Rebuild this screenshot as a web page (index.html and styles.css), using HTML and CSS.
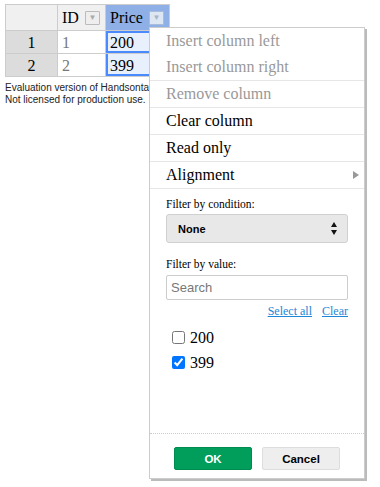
FILE: index.html
```html
<!DOCTYPE html>
<html lang="en">
  <head>
    <meta charset="UTF-8" />
    <meta name="viewport" content="width=device-width, initial-scale=1" />
    <title>Handsontable Filters</title>
    <link rel="stylesheet" href="styles.css">
  </head>
  <body>
    <div class="sheet">
      <table class="grid">
        <colgroup>
          <col class="col-rowhead" />
          <col class="col-id" />
          <col class="col-price" />
        </colgroup>
        <thead>
          <tr>
            <th class="corner"></th>
            <th class="colhead">
              <div class="colhead-inner">
                <span>ID</span>
                <button class="dropdown-btn">&#9660;</button>
              </div>
            </th>
            <th class="colhead active">
              <div class="colhead-inner">
                <span>Price</span>
                <button class="dropdown-btn">&#9660;</button>
              </div>
            </th>
          </tr>
        </thead>
        <tbody>
          <tr>
            <th class="rowhead">1</th>
            <td class="dimmed">1</td>
            <td class="area current">200</td>
          </tr>
          <tr>
            <th class="rowhead">2</th>
            <td class="dimmed">2</td>
            <td class="area last">399</td>
          </tr>
        </tbody>
      </table>
      <div class="license">
        Evaluation version of Handsontable<br />
        Not licensed for production use.
      </div>
    </div>

    <div class="menu">
      <ul class="menu-list">
        <li class="menu-item disabled first">Insert column left</li>
        <li class="menu-item disabled">Insert column right</li>
        <li class="menu-item disabled">Remove column</li>
        <li class="menu-item">Clear column</li>
        <li class="menu-item">Read only</li>
        <li class="menu-item submenu">
          <span>Alignment</span>
          <svg class="submenu-arrow" width="6" height="8" viewBox="0 0 6 8">
            <path d="M0 0 L6 4 L0 8 Z" fill="#999" />
          </svg>
        </li>
      </ul>

      <div class="filter">
        <label class="filter-label">Filter by condition:</label>
        <div class="select">
          <span>None</span>
          <svg width="6" height="13" viewBox="0 0 6 13">
            <path d="M3 0 L6 5 L0 5 Z" fill="#111" />
            <path d="M0 8 L6 8 L3 13 Z" fill="#111" />
          </svg>
        </div>

        <label class="filter-label value-label">Filter by value:</label>
        <input class="search" type="text" placeholder="Search" />
        <div class="links">
          <a href="#">Select all</a>
          <a href="#">Clear</a>
        </div>
        <ul class="values">
          <li><input type="checkbox" id="v200" /><label for="v200">200</label></li>
          <li><input type="checkbox" id="v399" checked /><label for="v399">399</label></li>
        </ul>
      </div>

      <div class="menu-footer">
        <button class="btn btn-ok">OK</button>
        <button class="btn btn-cancel">Cancel</button>
      </div>
    </div>
  </body>
</html>
```

FILE: styles.css
```css
:root {
  --serif: 'Liberation Serif', 'Times New Roman', serif;
  --sans: 'Liberation Sans', Arial, sans-serif;
  --grid-border: #ccc;
  --select-blue: #4b89ff;
}
* {
  box-sizing: border-box;
}
html,
body {
  margin: 0;
  padding: 0;
  background: #fff;
  color: #000;
  font-family: var(--serif);
  font-size: 16px;
}
body {
  position: relative;
  height: 487px;
  overflow: hidden;
}
.sheet {
  padding: 4px 0 0 5px;
}

/* grid */
.grid {
  border-collapse: collapse;
  table-layout: fixed;
  width: 164px;
}
.col-rowhead {
  width: 52px;
}
.col-id {
  width: 48px;
}
.col-price {
  width: 64px;
}
.grid th,
.grid td {
  border: 1px solid var(--grid-border);
  padding: 0 4px;
  height: 23px;
  line-height: 21px;
  font-weight: 400;
  text-align: left;
  white-space: nowrap;
  overflow: hidden;
}
.grid thead th {
  height: 26px;
  background: #f0f0f0;
}
.grid thead th.active {
  background: #8eb0e7;
}
.colhead-inner {
  display: flex;
  align-items: center;
  justify-content: space-between;
  padding-right: 1px;
}
.dropdown-btn {
  width: 15px;
  height: 14px;
  padding: 0;
  font-size: 8px;
  line-height: 12px;
  color: #aaa;
  background: #eee;
  border: 1px solid #bbb;
  border-radius: 1px;
}
.active .dropdown-btn {
  background: #dde6f3;
  border-color: #a9bcd9;
  color: #a9b4c4;
}
.grid .rowhead {
  background: #dcdcdc;
  text-align: center;
}
.grid td.dimmed {
  color: #777;
}
.grid td.area {
  background: #e8f0fd;
  box-shadow: inset 1px 0 0 var(--select-blue);
}
.grid td.current {
  box-shadow: inset 0 0 0 2px var(--select-blue);
}
.grid td.last {
  box-shadow: inset 2px 0 0 var(--select-blue), inset 0 -2px 0 var(--select-blue);
}
.license {
  margin-top: 5px;
  font-family: var(--sans);
  font-size: 10px;
  line-height: 12px;
  color: #222;
}

/* context menu */
.menu {
  position: absolute;
  left: 149px;
  top: 27px;
  width: 216px;
  height: 452px;
  display: flex;
  flex-direction: column;
  background: #fff;
  border: 1px solid #ccc;
  box-shadow: 2px 2px 0 #bbb;
}
.menu-list {
  list-style: none;
  margin: 0;
  padding: 0;
}
.menu-item {
  height: 27px;
  line-height: 26px;
  padding: 0 5px 0 16px;
  border-bottom: 1px solid #e6e6e6;
  display: flex;
  align-items: center;
  justify-content: space-between;
}
.menu-item.first {
  height: 26px;
  border-bottom: none;
}
.menu-item.disabled {
  color: #999;
}
.submenu-arrow {
  display: block;
}

.filter {
  padding: 8px 16px 0;
}
.filter-label {
  display: block;
  font-size: 11.5px;
  line-height: 14px;
}
.value-label {
  margin-top: 14px;
}
.select {
  margin-top: 3px;
  height: 29px;
  padding: 0 10px 0 11px;
  display: flex;
  align-items: center;
  justify-content: space-between;
  background: #e8e8e8;
  border: 1px solid #d0d0d0;
  border-radius: 3px;
  font-family: var(--sans);
  font-size: 11px;
  font-weight: 700;
}
.search {
  display: block;
  width: 100%;
  height: 25px;
  margin-top: 4px;
  padding: 0 4px;
  font-family: var(--sans);
  font-size: 13px;
  border: 1px solid #ccc;
  border-radius: 2px;
  outline: none;
}
.search::placeholder {
  color: #777;
}
.links {
  margin-top: 3px;
  display: flex;
  justify-content: flex-end;
  gap: 10px;
  font-size: 12px;
  line-height: 16px;
}
.links a {
  color: #1c87d6;
}
.values {
  list-style: none;
  margin: 6px 0 0;
  padding: 0 0 0 6px;
}
.values li {
  height: 25px;
  display: flex;
  align-items: center;
  gap: 5px;
}
.values input {
  margin: 0;
  width: 13px;
  height: 13px;
}

.menu-footer {
  margin-top: auto;
  border-top: 1px dotted #ccc;
  padding: 13px 0 8px;
  display: flex;
  justify-content: center;
  gap: 10px;
}
.btn {
  width: 78px;
  height: 23px;
  padding: 0;
  font-family: var(--sans);
  font-size: 11.5px;
  font-weight: 700;
  border-radius: 2px;
}
.btn-ok {
  background: #009d5b;
  border: 1px solid #008c50;
  color: #fff;
}
.btn-cancel {
  background: #eee;
  border: 1px solid #ddd;
  color: #000;
}
```
